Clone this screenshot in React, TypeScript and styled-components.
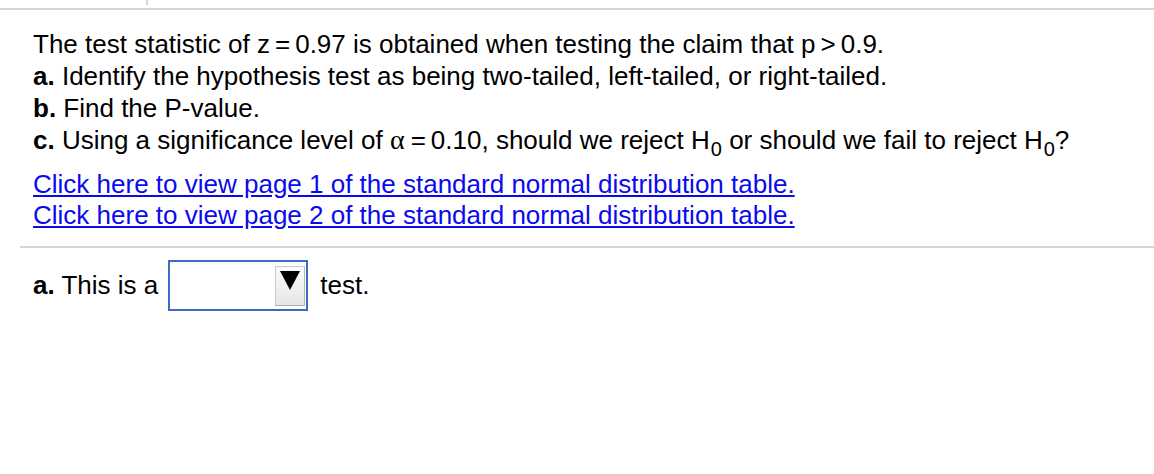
import React from "react";
import styled, { createGlobalStyle } from "styled-components";

const Global = createGlobalStyle`
  html, body { margin: 0; padding: 0; background: #ffffff; }
  body { font-family: "Liberation Sans", Arial, sans-serif; color: #000; }
`;

const TopBar = styled.div`
  height: 8px;
  border-bottom: 2px solid #d3d5df;
  display: flex;
`;

const TabDivider = styled.div`
  margin-left: 146px;
  width: 2px;
  height: 5px;
  background: #d3d5df;
`;

const Content = styled.div`
  padding: 18px 0 0 33px;
`;

const Question = styled.div`
  font-size: 26px;
  line-height: 32px;
`;

const Line = styled.div``;

const Bold = styled.b`
  font-weight: bold;
`;

const Alpha = styled.span`
  font-family: "Liberation Serif", "Times New Roman", serif;
  font-size: 28px;
  margin-right: 1px;
`;

const Op = styled.span`
  margin: 0 5px;
`;

const Sub = styled.sub`
  font-size: 20px;
  vertical-align: -7px;
  line-height: 0;
  margin-left: 1px;
`;

const Links = styled.div`
  margin-top: 13px;
  font-size: 26px;
  line-height: 31px;
`;

const Link = styled.a`
  display: block;
  color: #0a0aee;
  text-decoration: underline;
  width: fit-content;
`;

const Separator = styled.div`
  margin: 15px 0 0 20px;
  height: 2px;
  background: #d3d5df;
`;

const Answer = styled.div`
  display: flex;
  align-items: center;
  padding: 12px 0 0 33px;
  font-size: 26px;
`;

const Label = styled.span<{ $gap: number }>`
  margin: 0 ${(p) => p.$gap}px;
  &:first-child {
    margin-left: 0;
  }
`;

const SelectBox = styled.div`
  box-sizing: border-box;
  width: 140px;
  height: 51px;
  border: 2px solid #3d6bc4;
  display: flex;
  justify-content: flex-end;
  align-items: center;
  padding-right: 1px;
`;

const DropButton = styled.div`
  box-sizing: border-box;
  width: 30px;
  height: 40px;
  border: 1px solid #c8c8c8;
  border-right-color: #b8b8b8;
  border-bottom-color: #b0b0b0;
  background: linear-gradient(#fbfbfb, #e6e6e6);
  display: flex;
  align-items: center;
  justify-content: center;
  padding-bottom: 10px;
`;

const Triangle = styled.div`
  width: 0;
  height: 0;
  border-left: 10px solid transparent;
  border-right: 10px solid transparent;
  border-top: 19px solid #000;
`;

export default function App() {
  return (
    <>
      <Global />
      <TopBar>
        <TabDivider />
      </TopBar>
      <Content>
        <Question>
          <Line>
            The test statistic of z<Op>=</Op>0.97 is obtained when testing the claim that p<Op>&gt;</Op>0.9.
          </Line>
          <Line>
            <Bold>a.</Bold> Identify the hypothesis test as being two-tailed, left-tailed, or right-tailed.
          </Line>
          <Line>
            <Bold>b.</Bold> Find the P-value.
          </Line>
          <Line>
            <Bold>c.</Bold> Using a significance level of <Alpha>α</Alpha>
            <Op>=</Op>0.10, should we reject H<Sub>0</Sub> or should we fail to reject H<Sub>0</Sub>?
          </Line>
        </Question>
        <Links>
          <Link href="#">Click here to view page 1 of the standard normal distribution table.</Link>
          <Link href="#">Click here to view page 2 of the standard normal distribution table.</Link>
        </Links>
      </Content>
      <Separator />
      <Answer>
        <Label $gap={10}>
          <Bold>a.</Bold> This is a
        </Label>
        <SelectBox>
          <DropButton>
            <Triangle />
          </DropButton>
        </SelectBox>
        <Label $gap={12}>test.</Label>
      </Answer>
    </>
  );
}
